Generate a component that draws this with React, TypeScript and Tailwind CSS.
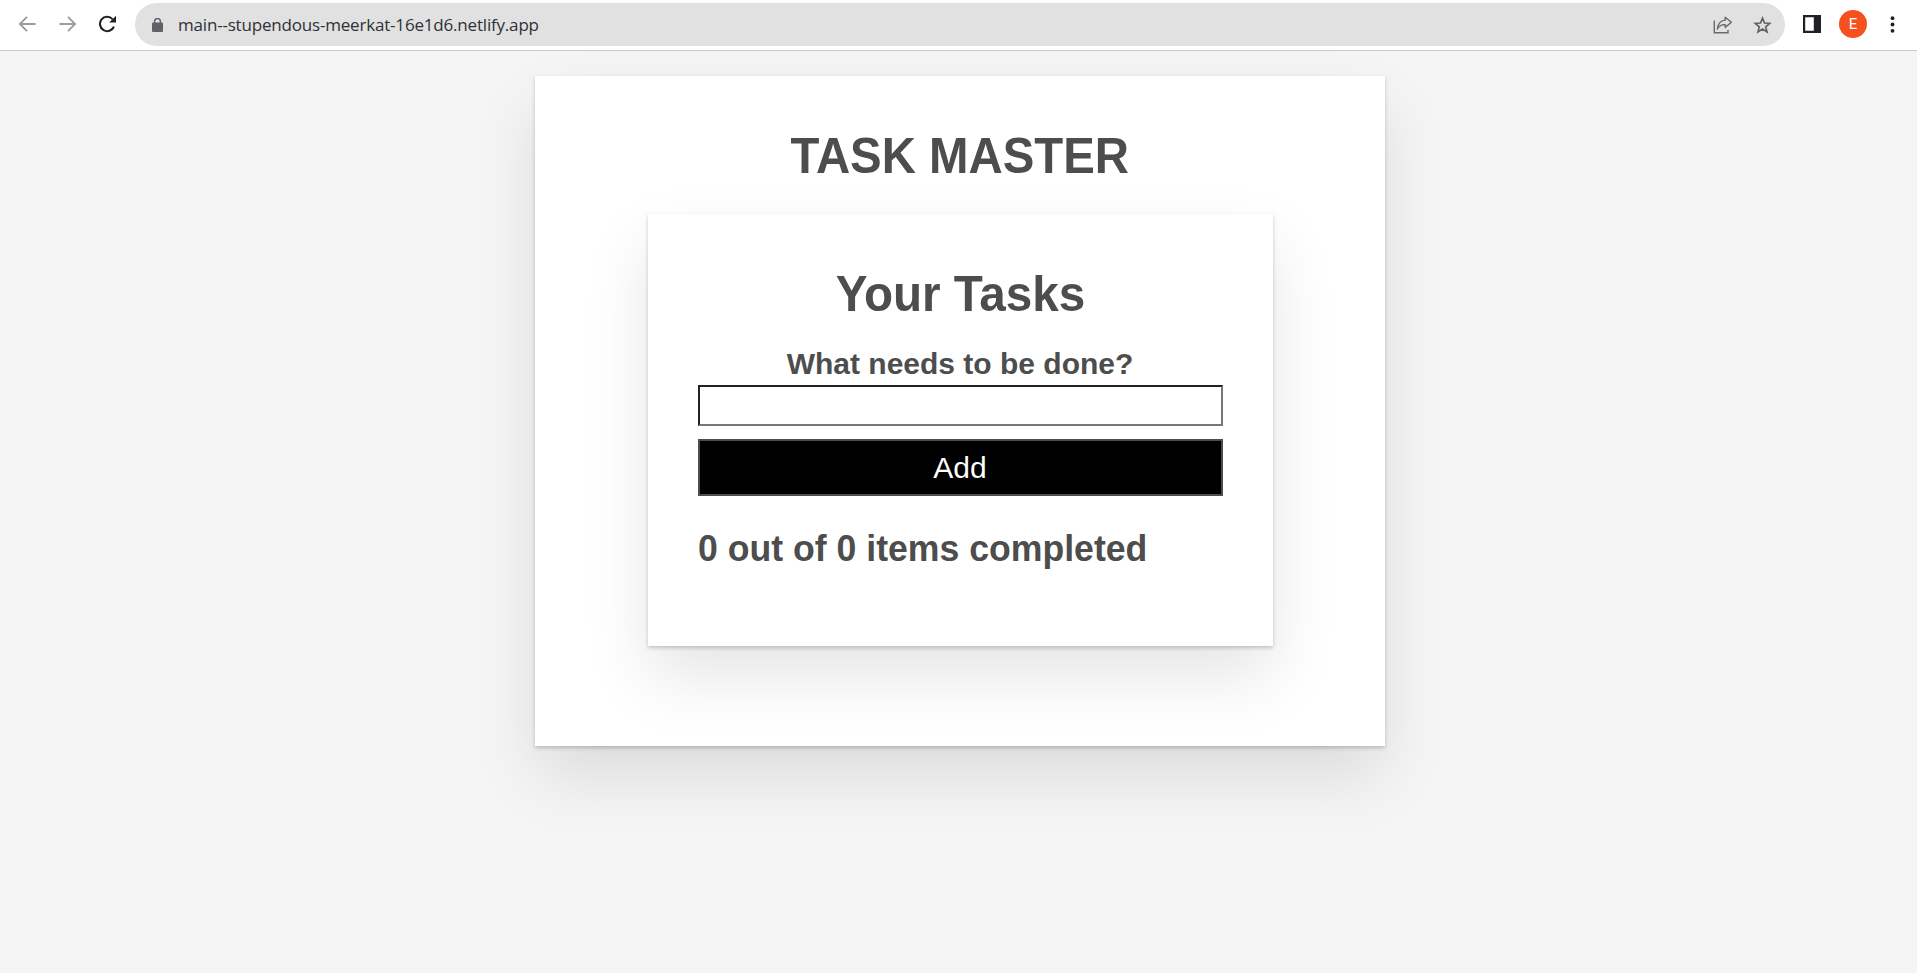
import { useState } from "react";

function Toolbar() {
  return (
    <header className="flex h-[51px] w-full items-center border-b border-[#c9cacc] bg-white">
      <nav className="flex w-[135px] shrink-0 items-center pb-[3px] text-[#9c9da0]">
        <svg className="ml-[18px]" width="19" height="18" viewBox="0 0 19 18" fill="none" stroke="currentColor" strokeWidth="1.9">
          <path d="M17.6 9H2.5M9 1.8 1.9 9 9 16.2" />
        </svg>
        <svg className="ml-[21px]" width="19" height="18" viewBox="0 0 19 18" fill="none" stroke="currentColor" strokeWidth="1.9">
          <path d="M1.4 9h15.1M10 1.8 17.1 9 10 16.2" />
        </svg>
        <svg className="ml-[21px] text-[#202124]" width="19" height="18" viewBox="0 0 19 18" fill="none">
          <path d="M14.5 4.1A7.2 7.2 0 1 0 15.9 11.6" stroke="currentColor" strokeWidth="2.1" />
          <path d="M18 .8v6.8h-6.8z" fill="currentColor" />
        </svg>
      </nav>
      <div className="mb-[2px] flex h-[43px] w-[1650px] shrink-0 items-center rounded-full bg-[#e1e1e1] pl-[17px] pr-[13px]">
        <svg className="mt-px" width="11" height="14" viewBox="0 0 11 14" fill="none">
          <rect y="4.6" width="11" height="9.4" rx="1" fill="#5f6368" />
          <path d="M2.6 5V3.4a2.9 2.9 0 0 1 5.8 0V5" stroke="#5f6368" strokeWidth="1.5" />
        </svg>
        <span className="mt-px ml-[15px] font-['Open_Sans',sans-serif] text-[17px] tracking-[-0.19px] whitespace-nowrap text-[#303134]">
          main--stupendous-meerkat-16e1d6.netlify.app
        </span>
        <svg className="ml-auto mt-[2px]" width="20" height="18" viewBox="0 0 20 18" fill="none" stroke="#66696d" strokeWidth="1.4">
          <path d="M1.3 4.5v12.2H15V14" />
          <path d="M12.2 1.2 18.4 6.2l-6.2 5.2V8.6C8.6 8.4 6 9.8 4.4 13c.3-5 3.2-8.3 7.8-8.9z" strokeLinejoin="round" />
        </svg>
        <svg className="ml-[20px] mt-[2px]" width="19" height="18" viewBox="0 0 19 18" fill="none" stroke="#5f6368" strokeWidth="1.7">
          <path d="m9.5 2.2 2 4.8 5.2.4-4 3.4 1.3 5.1-4.5-2.8L5 15.9l1.3-5.1-4-3.4L7.5 7z" />
        </svg>
      </div>
      <svg className="ml-[18px] mb-[3px]" width="18" height="18" viewBox="0 0 18 18">
        <path d="M0 0h18v18H0zM2.2 2.2v13.6h8.6V2.2z" fill="#202124" fillRule="evenodd" />
      </svg>
      <div className="mb-[2px] ml-[18px] flex size-7 items-center justify-center rounded-full bg-[#f4511e] font-[Roboto,sans-serif] text-[15px] leading-none text-white">
        E
      </div>
      <svg className="mb-[2px] ml-[23px]" width="5" height="17" viewBox="0 0 5 17" fill="#202124">
        <circle cx="2.5" cy="2.2" r="1.9" />
        <circle cx="2.5" cy="8.5" r="1.9" />
        <circle cx="2.5" cy="14.8" r="1.9" />
      </svg>
    </header>
  );
}

function TaskForm() {
  const [name, setName] = useState("");
  return (
    <form className="flex flex-col" onSubmit={(e) => e.preventDefault()}>
      <label htmlFor="task" className="mt-[20px] h-[42px] text-center text-[30px] leading-[41px] font-bold">
        What needs to be done?
      </label>
      <input
        id="task"
        value={name}
        autoComplete="off"
        onChange={(e) => setName(e.target.value)}
        className="h-[41px] border-2 border-t-[#212121] border-r-[#767676] border-b-[#767676] border-l-[#212121] bg-white px-2 text-2xl outline-none"
      />
      <button type="submit" className="mt-[13px] h-[57px] border-2 border-[#4d4d4d] bg-black text-[30px] leading-[53px] text-white">
        Add
      </button>
    </form>
  );
}

export default function App() {
  return (
    <div className="flex h-screen flex-col overflow-hidden bg-[#f5f5f5] font-['Liberation_Sans',Arial,sans-serif] text-[#4d4d4d]">
      <Toolbar />
      <div className="ml-[535px] mt-[25px] flex h-[670px] w-[850px] shrink-0 flex-col items-center bg-white shadow-[0_2px_4px_0_rgba(0,0,0,0.2),0_31.25px_62.5px_0_rgba(0,0,0,0.1)]">
        <h1 className="mt-[50px] h-[60px] scale-x-[0.947] text-[50px] leading-[60px] font-bold whitespace-nowrap">TASK MASTER</h1>
        <main className="mt-[28px] flex h-[432px] w-[625px] flex-col bg-white px-[50px] pt-[51px] shadow-[0_2px_4px_0_rgba(0,0,0,0.2),0_31.25px_62.5px_0_rgba(0,0,0,0.1)]">
          <h1 className="h-[58px] scale-x-[0.952] text-center text-[50px] leading-[58px] font-bold">Your Tasks</h1>
          <TaskForm />
          <h2 className="mt-[30px] origin-left scale-x-[0.95] text-[37.5px] leading-[44px] font-bold whitespace-nowrap">0 out of 0 items completed</h2>
        </main>
      </div>
    </div>
  );
}
